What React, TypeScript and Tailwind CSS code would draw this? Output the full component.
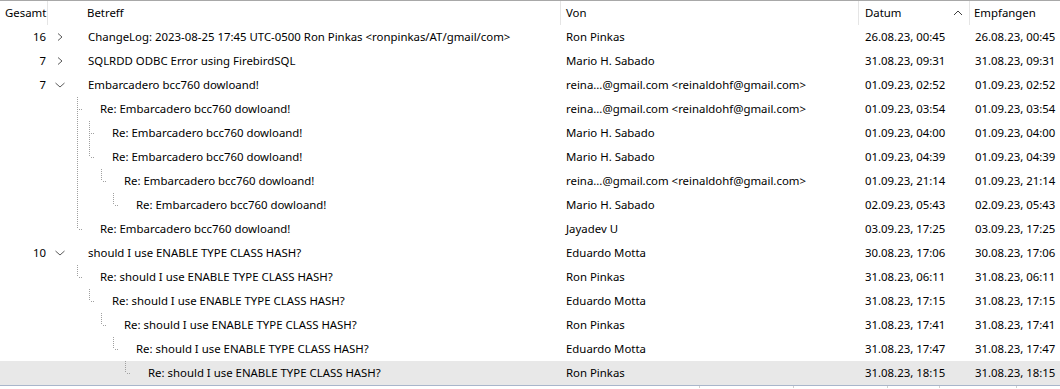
import React from "react";

type Row = {
  total?: string;
  chevron?: "right" | "down";
  level: number;
  subject: string;
  from: string;
  date: string;
  recv: string;
  full?: number[];
  half?: number;
  ownFull?: boolean;
  selected?: boolean;
};

const rows: Row[] = [
  { total: "16", chevron: "right", level: 0, subject: "ChangeLog: 2023-08-25 17:45 UTC-0500 Ron Pinkas <ronpinkas/AT/gmail/com>", from: "Ron Pinkas", date: "26.08.23, 00:45", recv: "26.08.23, 00:45" },
  { total: "7", chevron: "right", level: 0, subject: "SQLRDD ODBC Error using FirebirdSQL", from: "Mario H. Sabado", date: "31.08.23, 09:31", recv: "31.08.23, 09:31" },
  { total: "7", chevron: "down", level: 0, subject: "Embarcadero bcc760 dowloand!", from: "reina...@gmail.com <reinaldohf@gmail.com>", date: "01.09.23, 02:52", recv: "01.09.23, 02:52" },
  { level: 1, subject: "Re: Embarcadero bcc760 dowloand!", from: "reina...@gmail.com <reinaldohf@gmail.com>", date: "01.09.23, 03:54", recv: "01.09.23, 03:54", half: 1, ownFull: true },
  { level: 2, subject: "Re: Embarcadero bcc760 dowloand!", from: "Mario H. Sabado", date: "01.09.23, 04:00", recv: "01.09.23, 04:00", full: [1], half: 2, ownFull: true },
  { level: 2, subject: "Re: Embarcadero bcc760 dowloand!", from: "Mario H. Sabado", date: "01.09.23, 04:39", recv: "01.09.23, 04:39", full: [1], half: 2 },
  { level: 3, subject: "Re: Embarcadero bcc760 dowloand!", from: "reina...@gmail.com <reinaldohf@gmail.com>", date: "01.09.23, 21:14", recv: "01.09.23, 21:14", full: [1], half: 3 },
  { level: 4, subject: "Re: Embarcadero bcc760 dowloand!", from: "Mario H. Sabado", date: "02.09.23, 05:43", recv: "02.09.23, 05:43", full: [1], half: 4 },
  { level: 1, subject: "Re: Embarcadero bcc760 dowloand!", from: "Jayadev U", date: "03.09.23, 17:25", recv: "03.09.23, 17:25", half: 1 },
  { total: "10", chevron: "down", level: 0, subject: "should I use ENABLE TYPE CLASS HASH?", from: "Eduardo Motta", date: "30.08.23, 17:06", recv: "30.08.23, 17:06" },
  { level: 1, subject: "Re: should I use ENABLE TYPE CLASS HASH?", from: "Ron Pinkas", date: "31.08.23, 06:11", recv: "31.08.23, 06:11", half: 1 },
  { level: 2, subject: "Re: should I use ENABLE TYPE CLASS HASH?", from: "Eduardo Motta", date: "31.08.23, 17:15", recv: "31.08.23, 17:15", half: 2 },
  { level: 3, subject: "Re: should I use ENABLE TYPE CLASS HASH?", from: "Ron Pinkas", date: "31.08.23, 17:41", recv: "31.08.23, 17:41", half: 3 },
  { level: 4, subject: "Re: should I use ENABLE TYPE CLASS HASH?", from: "Eduardo Motta", date: "31.08.23, 17:47", recv: "31.08.23, 17:47", half: 4 },
  { level: 5, subject: "Re: should I use ENABLE TYPE CLASS HASH?", from: "Ron Pinkas", date: "31.08.23, 18:15", recv: "31.08.23, 18:15", half: 5, selected: true },
];

const lineX = (lvl: number) => 29 + 12 * (lvl - 1);

function Chevron({ dir }: { dir: "right" | "down" }) {
  return (
    <svg width="10" height="10" viewBox="0 0 10 10" className="shrink-0">
      {dir === "right" ? (
        <path d="M3 1.5 L7 5 L3 8.5" fill="none" stroke="#5a5a5a" strokeWidth="1" />
      ) : (
        <path d="M0.5 3 L5 7 L9.5 3" fill="none" stroke="#5a5a5a" strokeWidth="1" />
      )}
    </svg>
  );
}

function TreeLines({ r }: { r: Row }) {
  return (
    <svg width="120" height="24" className="absolute left-0 top-0 pointer-events-none">
      {(r.full || []).map((l) => (
        <line key={l} x1={lineX(l) + 0.5} y1={0} x2={lineX(l) + 0.5} y2={24} stroke="#a0a0a0" strokeWidth="1" strokeDasharray="1 1" />
      ))}
      {r.half !== undefined && (
        <>
          <line x1={lineX(r.half) + 0.5} y1={0} x2={lineX(r.half) + 0.5} y2={r.ownFull ? 24 : 12} stroke="#a0a0a0" strokeWidth="1" strokeDasharray="1 1" />
          <line x1={lineX(r.half) + 2} y1={12.5} x2={lineX(r.half) + 6} y2={12.5} stroke="#a0a0a0" strokeWidth="1" strokeDasharray="1 1" />
        </>
      )}
    </svg>
  );
}

export default function App() {
  const font = { fontFamily: '"Segoe UI", "Noto Sans", "Open Sans", sans-serif' };
  return (
    <div className="w-[1060px] h-[389px] overflow-hidden bg-white text-[11.4px] text-black" style={font}>
      {/* header */}
      <div className="flex h-[25px] border-t border-[#a8a8a8] items-stretch">
        <div className="w-[48px] flex items-center pl-[5px] border-r border-[#e5e5e5]">Gesamt</div>
        <div className="w-[513px] flex items-center pl-[39px] border-r border-[#e5e5e5]">Betreff</div>
        <div className="w-[298px] flex items-center pl-[5px] border-r border-[#e5e5e5]">Von</div>
        <div className="w-[111px] flex items-center pl-[6px] pr-[6px] justify-between border-r border-[#e5e5e5]">
          <span>Datum</span>
          <svg width="10" height="8" viewBox="0 0 10 8">
            <path d="M1 6 L5 2 L9 6" fill="none" stroke="#404040" strokeWidth="1" />
          </svg>
        </div>
        <div className="flex-1 flex items-center pl-[4px]">Empfangen</div>
      </div>
      {/* rows */}
      <div className="flex flex-col">
        {rows.map((r, i) => (
          <div key={i} className={`flex h-[24px] items-center ${r.selected ? "bg-[#e8e8e8]" : ""}`}>
            <div className="w-[48px] text-right pr-[2px]">{r.total}</div>
            <div className="w-[513px] relative h-full flex items-center">
              <TreeLines r={r} />
              <div className="w-[40px] pl-[7px] flex items-center">{r.chevron && <Chevron dir={r.chevron} />}</div>
              <div style={{ paddingLeft: r.level * 12 }} className="whitespace-nowrap">{r.subject}</div>
            </div>
            <div className="w-[298px] pl-[5px] whitespace-nowrap">{r.from}</div>
            <div className="w-[111px] pl-[6px] whitespace-nowrap">{r.date}</div>
            <div className="flex-1 pl-[5px] whitespace-nowrap">{r.recv}</div>
          </div>
        ))}
      </div>
      <div className="border-t border-[#a9b6cb] h-[3px] flex">
        <div className="w-[700px] border-r border-[#d0d0d0]" />
        <div className="w-[94px] border-r border-[#d0d0d0]" />
        <div className="w-[94px] border-r border-[#d0d0d0]" />
        <div className="w-[52px] border-r border-[#d0d0d0]" />
        <div className="w-[77px] border-r border-[#d0d0d0]" />
      </div>
    </div>
  );
}
